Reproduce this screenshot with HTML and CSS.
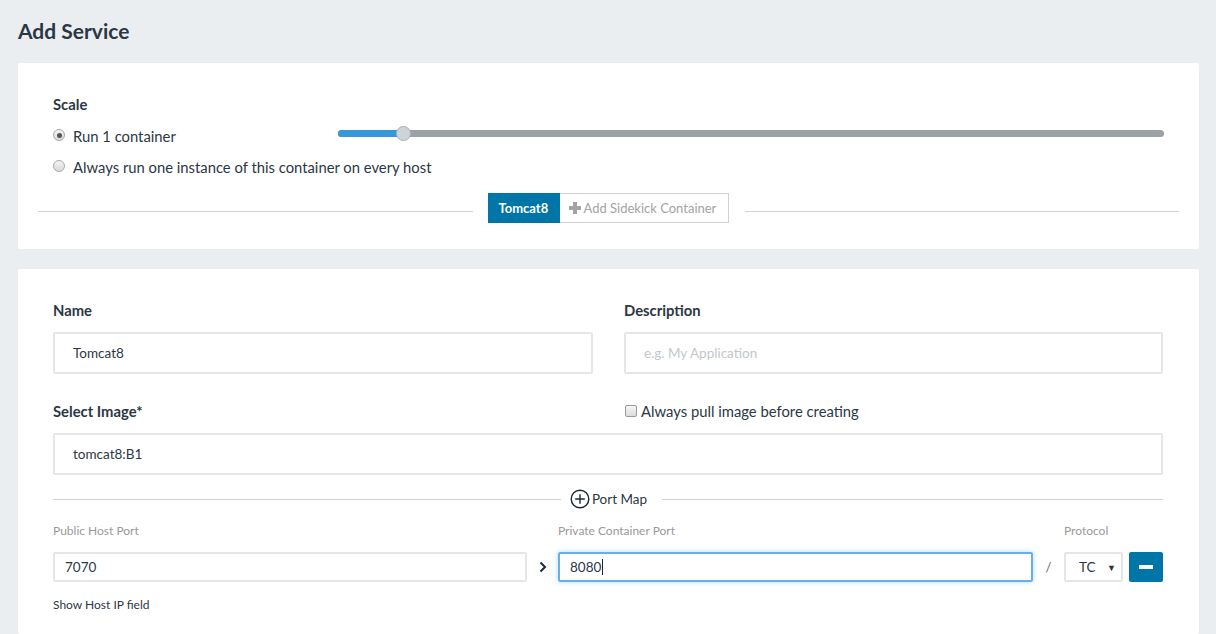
FILE: index.html
```html
<!DOCTYPE html>
<html>
<head>
<meta charset="utf-8">
<link rel="stylesheet" href="styles.css">
</head>
<body>
<div class="page">
  <h1 class="title">Add Service</h1>

  <section class="card card-scale">
    <div class="inner">
      <div class="label">Scale</div>
      <div class="scale-row">
        <div class="scale-options">
          <div class="radio-row"><span class="radio checked"></span><span>Run 1 container</span></div>
          <div class="radio-row"><span class="radio"></span><span>Always run one instance of this container on every host</span></div>
        </div>
        <div class="slider">
          <div class="track"><div class="fill"></div><div class="thumb"></div></div>
        </div>
      </div>
    </div>
    <div class="divider-row">
      <div class="line"></div>
      <div class="btn-group">
        <span class="btn-tab active">Tomcat8</span>
        <span class="btn-tab add"><span class="plus-solid"></span>Add Sidekick Container</span>
      </div>
      <div class="line"></div>
    </div>
  </section>

  <section class="card card-form">
    <div class="grid2">
      <div class="field">
        <div class="label">Name</div>
        <div class="input big">Tomcat8</div>
      </div>
      <div class="field">
        <div class="label">Description</div>
        <div class="input big placeholder">e.g. My Application</div>
      </div>
    </div>
    <div class="grid2 image-head">
      <div class="label">Select Image*</div>
      <div class="check-row"><span class="checkbox"></span><span>Always pull image before creating</span></div>
    </div>
    <div class="input big">tomcat8:B1</div>

    <div class="portmap-row">
      <div class="line left"></div>
      <div class="portmap">
        <svg width="20" height="20" viewBox="0 0 20 20"><circle cx="10" cy="10" r="8.8" fill="none" stroke="#1d2733" stroke-width="1.4"/><path d="M10 5.2v9.6M5.2 10h9.6" stroke="#1d2733" stroke-width="1.4"/></svg>
        <span>Port Map</span>
      </div>
      <div class="line right"></div>
    </div>

    <div class="ports">
      <div class="small-label">Public Host Port</div>
      <div></div>
      <div class="small-label">Private Container Port</div>
      <div></div>
      <div class="small-label">Protocol</div>
      <div></div>

      <div class="input small">7070</div>
      <div class="sep arrow"><svg width="8" height="12" viewBox="0 0 8 12"><path d="M1.5 1.5l4.5 4.5-4.5 4.5" fill="none" stroke="#1d2733" stroke-width="2"/></svg></div>
      <div class="input small focus">8080<span class="caret"></span></div>
      <div class="sep slash">/</div>
      <div class="select"><span>TC</span><span class="tri">▼</span></div>
      <div class="minus-btn"><span class="bar"></span></div>
    </div>
    <div class="show-ip">Show Host IP field</div>
  </section>
</div>
</body>
</html>
```

FILE: styles.css
```css
* { box-sizing: border-box; }
html, body { margin: 0; padding: 0; }
body {
  background: #ebeef0;
  font-family: Lato, "Open Sans", "Liberation Sans", sans-serif;
  color: #2b3744;
  height: 634px;
  overflow: hidden;
}
.page { padding: 0 17px 0 18px; }
.title {
  margin: 0;
  padding-top: 17px;
  height: 63px;
  font-size: 21px;
  font-weight: 700;
  line-height: 28px;
  color: #2b3744;
}
.card {
  background: #fff;
  border-radius: 2px;
}
.card-scale {
  height: 186px;
  padding: 31px 20px 0 20px;
  margin-bottom: 20px;
}
.card-scale .inner { padding: 0 15px; }
.label {
  font-size: 14.8px;
  font-weight: 700;
  line-height: 20px;
}
.scale-row {
  display: flex;
  align-items: flex-start;
  margin-top: 12px;
}
.scale-options { width: 285px; flex: none; }
.radio-row {
  display: flex;
  align-items: center;
  height: 20px;
  font-size: 14.8px;
  white-space: nowrap;
  margin-bottom: 11px;
}
.radio {
  width: 12px; height: 12px;
  border-radius: 50%;
  border: 1px solid #a9a9a9;
  background: linear-gradient(#f4f4f4, #d9d9d9);
  margin-right: 8px;
  position: relative;
  flex: none;
  top: -1px;
}
.radio.checked::after {
  content: "";
  position: absolute;
  left: 2.5px; top: 2.5px;
  width: 5px; height: 5px;
  border-radius: 50%;
  background: #555;
}
.slider { flex: 1; padding-top: 4px; }
.track {
  position: relative;
  height: 7px;
  border-radius: 4px;
  background: #9ba1a6;
}
.fill {
  position: absolute;
  left: 0; top: 0; bottom: 0;
  width: 68px;
  background: #3498db;
  border-radius: 4px 0 0 4px;
}
.thumb {
  position: absolute;
  left: 58px; top: -4px;
  width: 15px; height: 15px;
  border-radius: 50%;
  background: #cfd4d8;
  border: 1px solid #a9afb4;
}
.divider-row {
  display: flex;
  align-items: center;
  margin-top: 5px;
}
.line { flex: 1; height: 1px; background: #d3d3d3; }
.line.left { flex-grow: 509; }
.line.right { flex-grow: 502; }
.divider-row .btn-group { margin: 0 16px 6px 15px; }
.btn-group { display: flex; }
.btn-tab {
  height: 30px;
  display: flex;
  align-items: center;
  font-size: 13px;
  white-space: nowrap;
}
.btn-tab.active {
  background: #0075a8;
  color: #fff;
  font-weight: 700;
  padding: 0 11px;
  width: 72px;
}
.btn-tab.add {
  border: 1px solid #d0d0d0;
  border-left: none;
  color: #a3a3a3;
  padding: 0 10px 0 9px;
  width: 169px;
}
.plus-solid {
  width: 12px; height: 12px;
  margin-right: 3px;
  position: relative;
  flex: none;
}
.plus-solid::before, .plus-solid::after {
  content: ""; position: absolute; background: #a3a3a3;
}
.plus-solid::before { left: 4px; top: 0; width: 4px; height: 12px; }
.plus-solid::after { left: 0; top: 4px; width: 12px; height: 4px; }

.card-form {
  padding: 31px 36px 0 35px;
  height: 365px;
}
.grid2 {
  display: grid;
  grid-template-columns: 540px 1fr;
  column-gap: 31px;
}
.field .label { margin-bottom: 12px; }
.input {
  border: 2px solid #e6e6e6;
  border-radius: 2px;
  font-size: 13.5px;
  display: flex;
  align-items: center;
  color: #2b3744;
}
.input.big { height: 42px; padding-left: 18px; }
.input.placeholder { color: #c3c7cb; }
.image-head { margin-top: 27px; margin-bottom: 12px; align-items: center; }
.check-row {
  display: flex;
  align-items: center;
  font-size: 14.8px;
  height: 20px;
  white-space: nowrap;
}
.checkbox {
  width: 12px; height: 12px;
  border: 1px solid #999;
  border-radius: 2px;
  background: linear-gradient(#f6f6f6, #dcdcdc);
  margin: 0 4px 0 1px;
}
.portmap-row {
  display: flex;
  align-items: center;
  margin-top: 13px;
  height: 22px;
}
.portmap {
  display: flex;
  align-items: center;
  margin: 0 15px 0 9px;
  font-size: 13.5px;
}
.portmap svg { margin-right: 2px; }
.ports {
  display: grid;
  grid-template-columns: 474px 31px 475px 31px 59px 34px;
  column-gap: 0;
  margin-top: 11px;
}
.small-label {
  font-size: 12px;
  color: #999;
  line-height: 20px;
  margin-bottom: 11px;
  white-space: nowrap;
}
.input.small { height: 30px; padding-left: 10px; font-size: 13.5px; }
.input.focus {
  border: 2px solid #66afe9;
  box-shadow: 0 0 5px rgba(102, 175, 233, 0.5);
}
.caret { width: 1px; height: 16px; background: #222; margin-left: 1px; }
.sep { display: flex; align-items: center; justify-content: center; }
.slash { font-size: 13px; color: #666; }
.select {
  height: 30px;
  border: 2px solid #e6e6e6;
  border-radius: 2px;
  display: flex;
  align-items: center;
  justify-content: space-between;
  padding: 0 5px 0 13px;
  font-size: 13.5px;
}
.select .tri { font-size: 9px; color: #333; }
.minus-btn {
  margin-left: 6px;
  width: 34px;
  height: 30px;
  background: #0075a8;
  border-radius: 2px;
  display: flex;
  align-items: center;
  justify-content: center;
}
.minus-btn .bar { width: 14px; height: 4px; background: #fff; }
.show-ip {
  margin-top: 13px;
  font-size: 12px;
  line-height: 20px;
}
```
